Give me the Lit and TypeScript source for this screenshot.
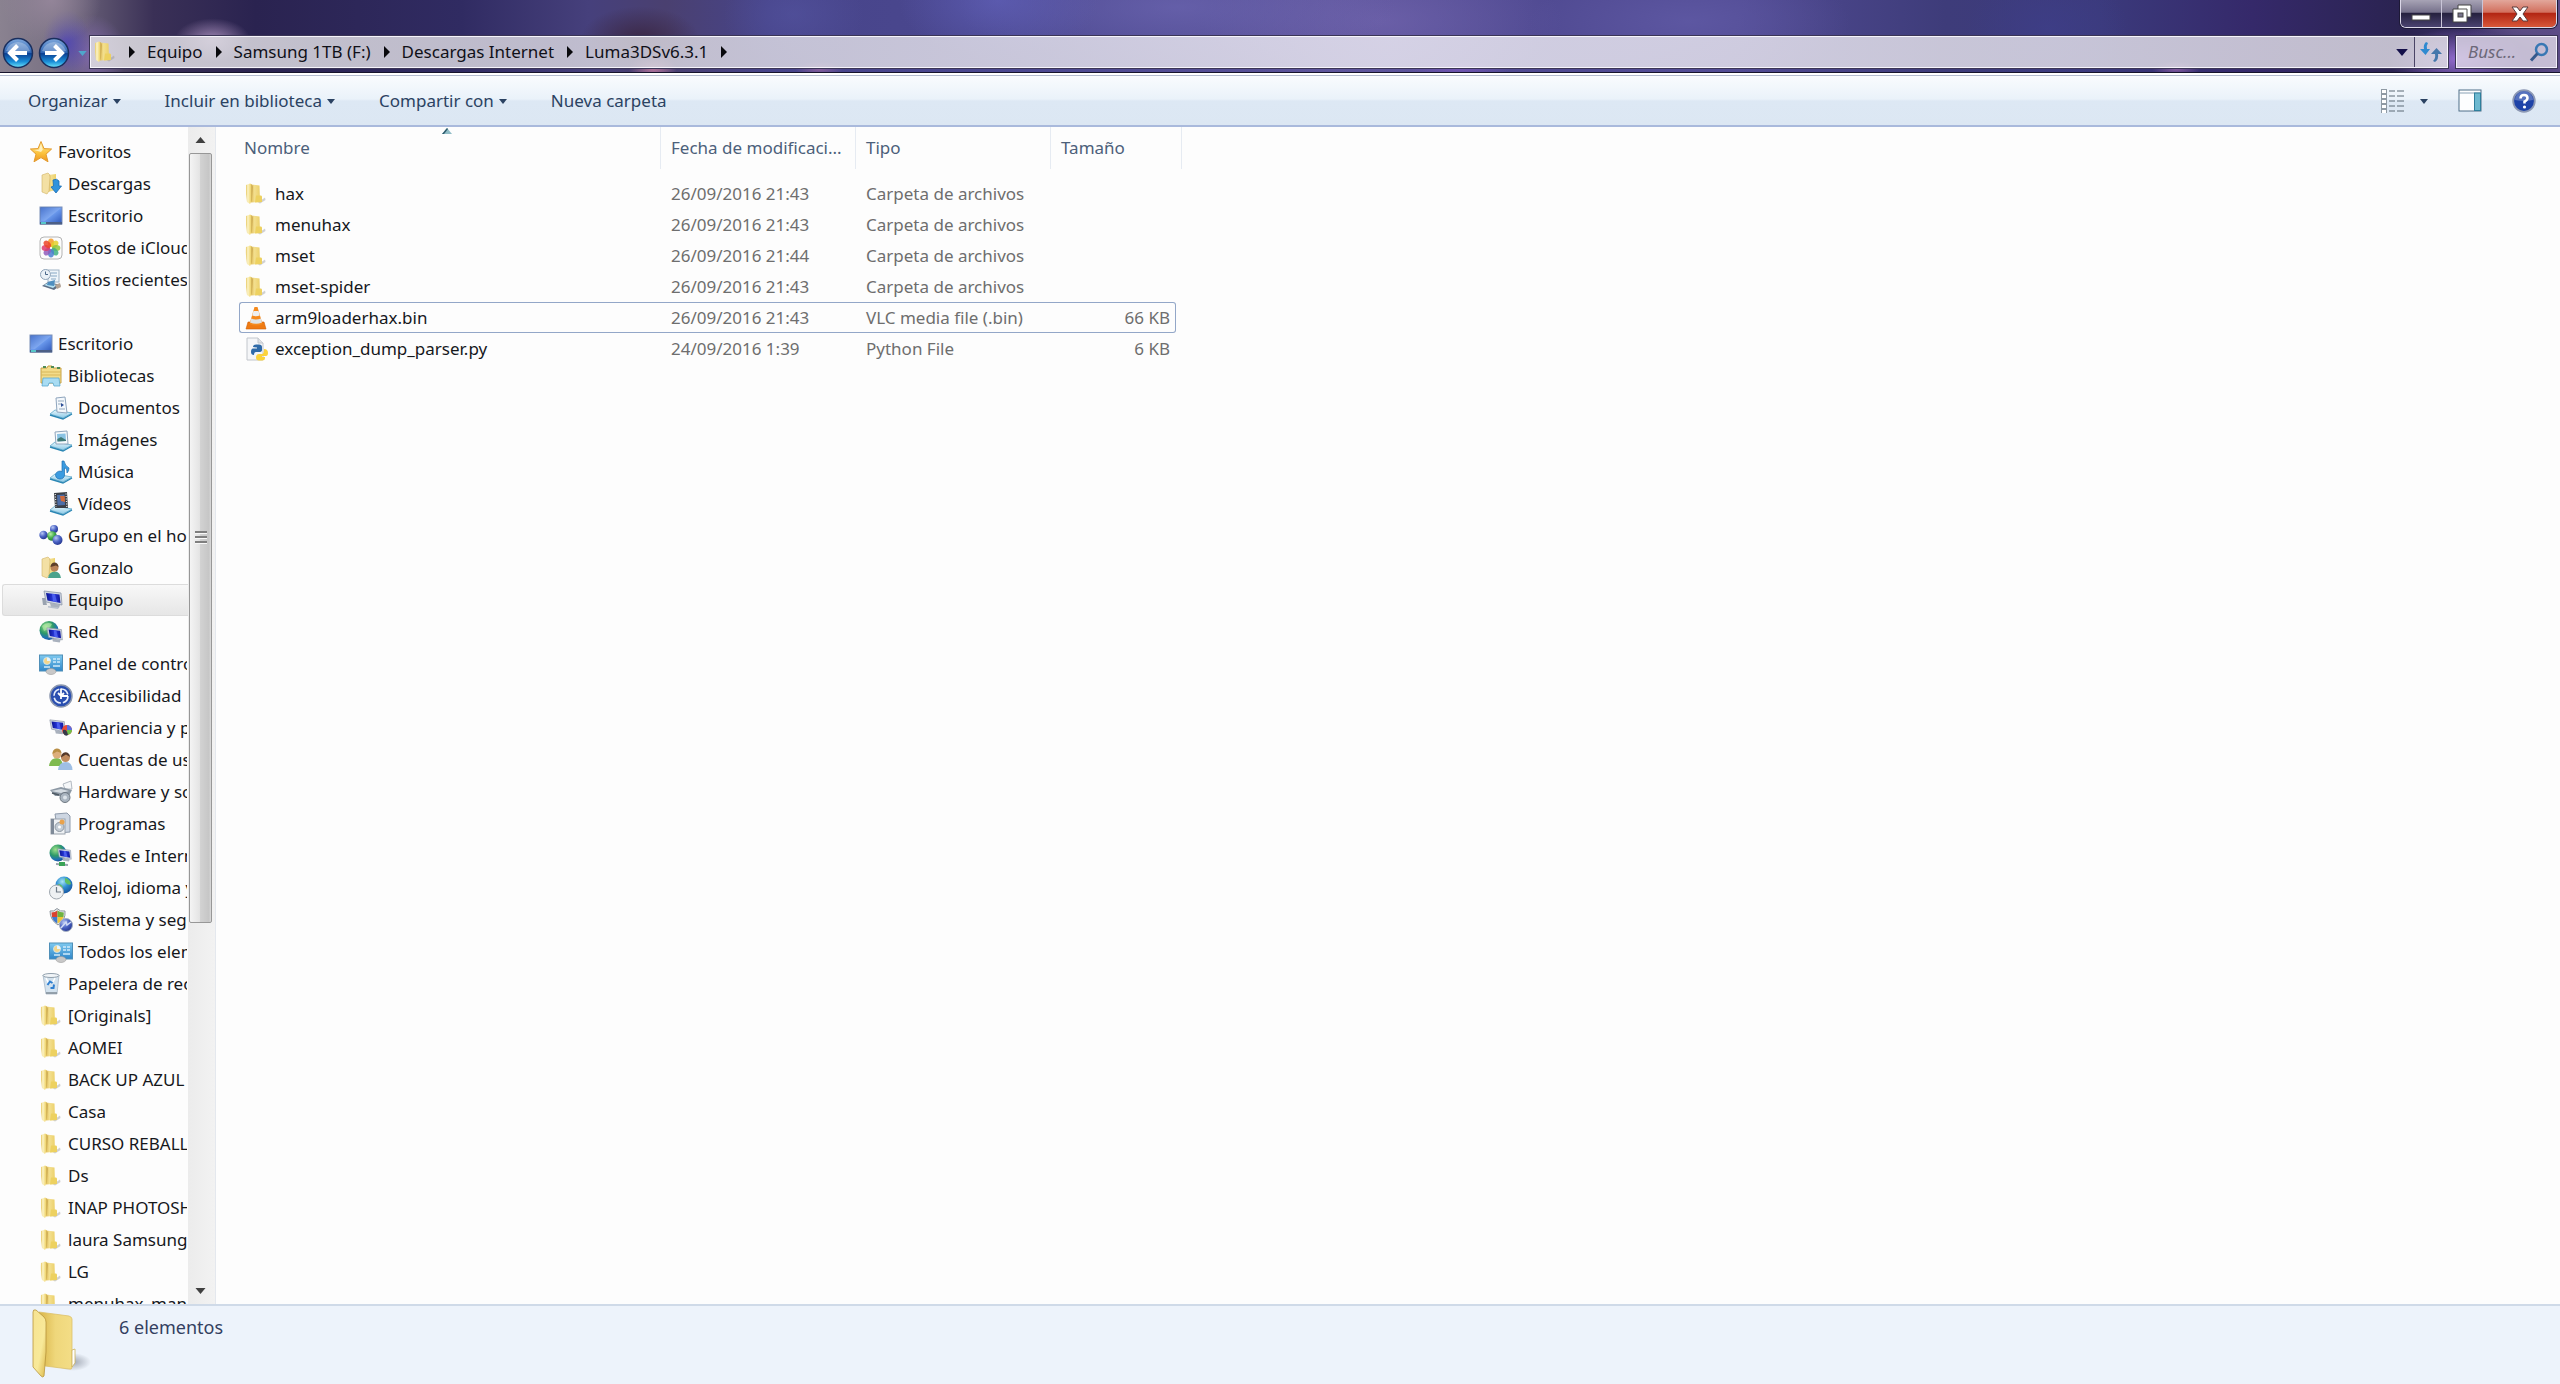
import { LitElement, html, css, svg, TemplateResult } from "lit";
import { customElement, state } from "lit/decorators.js";
import { classMap } from "lit/directives/class-map.js";

type IconName = string;

interface TreeItem {
  label: string;
  icon: IconName;
  level: number;
}

interface FileRow {
  name: string;
  icon: IconName;
  date: string;
  type: string;
  size: string;
}

const gradients = svg`
  <linearGradient id="gold" x1="0" x2="1"><stop offset="0" stop-color="#e2c05c"/><stop offset=".4" stop-color="#f3df8e"/><stop offset="1" stop-color="#ecd06a"/></linearGradient>
  <linearGradient id="goldFront" x1="0" x2="1"><stop offset="0" stop-color="#e6c65e"/><stop offset=".3" stop-color="#fcf4c8"/><stop offset=".7" stop-color="#f1d878"/><stop offset="1" stop-color="#b8923a"/></linearGradient>
  <linearGradient id="screen" x1="0" y1="0" x2="1" y2="1"><stop offset="0" stop-color="#2f5fc4"/><stop offset=".5" stop-color="#6c9bee"/><stop offset="1" stop-color="#2c55b8"/></linearGradient>
  <linearGradient id="navy" x1="0" x2="1"><stop offset="0" stop-color="#0a1390"/><stop offset=".5" stop-color="#2a3ae0"/><stop offset="1" stop-color="#10179c"/></linearGradient>
  <linearGradient id="tray" x1="0" y1="0" x2="0" y2="1"><stop offset="0" stop-color="#e6f6fc"/><stop offset="1" stop-color="#8cc9e6"/></linearGradient>
  <radialGradient id="globe" cx=".35" cy=".3" r=".8"><stop offset="0" stop-color="#9fe08a"/><stop offset=".45" stop-color="#2e9a68"/><stop offset=".75" stop-color="#1f6fb8"/><stop offset="1" stop-color="#123f80"/></radialGradient>
  <radialGradient id="globeBlue" cx=".4" cy=".3" r=".8"><stop offset="0" stop-color="#a8e6f4"/><stop offset=".45" stop-color="#2f8fd2"/><stop offset="1" stop-color="#124a96"/></radialGradient>
  <radialGradient id="ballBlue" cx=".35" cy=".3" r=".8"><stop offset="0" stop-color="#b9c8f5"/><stop offset=".5" stop-color="#4a63c4"/><stop offset="1" stop-color="#1f2f86"/></radialGradient>
  <radialGradient id="ballGreen" cx=".35" cy=".3" r=".8"><stop offset="0" stop-color="#b8f0a8"/><stop offset=".5" stop-color="#45ad4c"/><stop offset="1" stop-color="#1e6e30"/></radialGradient>
  <linearGradient id="panel" x1="0" y1="0" x2="0" y2="1"><stop offset="0" stop-color="#7fcaf0"/><stop offset="1" stop-color="#2f86c8"/></linearGradient>
  <linearGradient id="star" x1="0" y1="0" x2="0" y2="1"><stop offset="0" stop-color="#fff0a0"/><stop offset=".6" stop-color="#fbc03a"/><stop offset="1" stop-color="#ee9420"/></linearGradient>`;

const tray = svg`
  <path d="M1 18 L6 14 L23 17 L14 22 Z" fill="url(#tray)" stroke="#5fa9cc" stroke-width=".8"/>
  <path d="M1 19 L14 23 L23 18" fill="none" stroke="#2a86b4" stroke-width="1.4"/>`;

const monitor = (x: number, y: number, s: number) => svg`
  <g transform="translate(${x} ${y}) scale(${s})">
    <path d="M7 13 L17 15 L16 18 L8 17 Z" fill="#a9b1bd"/>
    <path d="M1 1 L18 3 L19 15 L3 12 Z" fill="#cfd6e2" stroke="#8d97a8" stroke-width=".8"/>
    <path d="M3 3 L16.500 4.500 L17.500 13 L4.500 10.500 Z" fill="url(#navy)"/>
    <path d="M9 4 L12 4.200 L14 12 L10 11.500 Z" fill="#5468f2" opacity=".8"/>
  </g>`;

const shapes: Record<string, TemplateResult> = {
  folder: svg`
    <path d="M14 20.500 L21 15.500 L21.500 18 L16 21.500 Z" fill="#8f8f8f" opacity=".4"/>
    <path d="M7 2.500 L15.500 3.500 L16 20 L7 20.500 Z" fill="url(#gold)"/>
    <path d="M12 13.500 L17 13.500 Q18 13.500 18 15 L18 20 L11 20.500 Z" fill="#edd160"/>
    <path d="M2 3 L6 1.500 Q8.500 2 8.500 5 L8 18 L6 22 L3 20 Q1.500 12 2 3 Z" fill="url(#goldFront)"/>`,
  star: svg`<path d="M12 1.500 L15 8.600 L22.600 9 L17 14.200 L19 21.800 L12 17.600 L5 21.800 L7 14.200 L1.400 9 L9 8.600 Z" fill="url(#star)" stroke="#e39a2c" stroke-width="1"/>
    <path d="M12 4 L13.800 9.800 L12 12 L5 10 L10 9.500 Z" fill="#fffbe0" opacity=".75"/>`,
  downloads: svg`
    <path d="M9 3 L17 2 L17 18 L9 20 Z" fill="url(#gold)"/>
    <path d="M3 3 L9 1 Q11 2 11 5 L10 19 L8 22 L3 20 Z" fill="#f3e0a4" stroke="#d1b466" stroke-width=".6"/>
    <path d="M14 8 Q18 6 20 9 L20 14 L22.500 14 L17 21 L12 15 L14.500 14 Z" fill="#2f93dd" stroke="#1a6db2" stroke-width=".8"/>`,
  desktop: svg`
    <rect x="1" y="3" width="22" height="17" fill="url(#screen)" stroke="#7b8fb8" stroke-width="1"/>
    <path d="M2 4 H22 L6 17 H2 Z" fill="#fff" opacity=".12"/>
    <rect x="1" y="18" width="22" height="2.500" fill="#4c5f86"/>
    <rect x="2" y="18" width="5" height="2" fill="#58c7c9"/>`,
  photos: svg`
    <rect x="1" y="1" width="22" height="22" rx="4" fill="#fcfcfc" stroke="#b4b4b4" stroke-width="1"/>
    ${[
      ["#f59a23", 0], ["#e3cf2a", 45], ["#8fc63b", 90], ["#3faf84", 135],
      ["#4a7fd0", 180], ["#8f5cbc", 225], ["#dc3a6c", 270], ["#ec4427", 315],
    ].map(([c, a]) => svg`<ellipse cx="12" cy="6.800" rx="3" ry="4.200" fill=${c} opacity=".85" transform="rotate(${a} 12 12)"/>`)}`,
  recent: svg`
    <path d="M3 18 L9 14 L22 17 L15 22 Z" fill="#5d6f86"/>
    <path d="M5 17 L9 15 L18 17 L14 20 Z" fill="#b7e2f2"/>
    <rect x="9" y="2" width="11" height="12" fill="#eef5fa" stroke="#9fb3c6"/>
    <path d="M12 5 h6 M12 8 h6 M12 11 h5" stroke="#86a7c4"/>
    <circle cx="6.500" cy="6.500" r="5" fill="#eaf1f7" stroke="#8ea3b8"/>
    <path d="M6.500 3.500 V6.500 H9" stroke="#4a6788" fill="none"/>
    <path d="M9 14 L16 12 L15 18 L8 17 Z" fill="#4f8fc0"/>
    <path d="M16 17 L21 15 L22 19 L18 21 Z" fill="#b4a394"/>`,
  libraries: svg`
    <path d="M2 4 H8 L9 2 H13 L14 4 H22 V19 H2 Z" fill="#f3dc8a" stroke="#c7a247"/>
    <path d="M2 8 H22 M2 11 H22" stroke="#d8b75a"/>
    <path d="M4 3 h3 M12 3 h3 M18 4 h3" stroke="#4f8b54" stroke-width="2"/>
    <path d="M4 14 L20 14 L21 22 L15 22 L14 19 L10 19 L9 22 L3 22 Z" fill="#a8dcf3" stroke="#5ba8cf" stroke-width=".8"/>`,
  documents: svg`${tray}
    <path d="M7 2 L16 1 L18 17 L8 16 Z" fill="#f4f8fc" stroke="#8fa5bd"/>
    <path d="M9 5 h6 M9 8 h3 M10 13 h6" stroke="#93a8bd"/><path d="M12 7 L15 9 L12 11 Z" fill="#2c4d96"/>`,
  images: svg`${tray}
    <path d="M6 4 L18 3 L19 16 L7 16 Z" fill="#f7fafc" stroke="#8fa5bd"/>
    <path d="M8 6 L16.500 5.500 L17 13 L8.500 13.500 Z" fill="#8ac3e4"/><path d="M8.300 11 L12 9 L17 12 L17 13 L8.500 13.500 Z" fill="#3f7a76"/>`,
  music: svg`${tray}
    <path d="M15 1 Q16 6 20 8 Q20 11 18 13 Q18 8 15.500 8 V15 A4.500 4 0 1 1 13 11.500 V1 Z" fill="#3b9be0" stroke="#1d6fb0" stroke-width=".7"/>`,
  videos: svg`${tray}
    <path d="M5 1 L18 0 L19 16 L6 16 Z" fill="#3b4048"/><path d="M8 3 L15.500 2.500 L16 13 L8.500 13.500 Z" fill="#4d6ea8"/>
    <path d="M11 4 L15.600 4 L16 10 L12 9 Z" fill="#cf6a3c"/><path d="M6.300 2 L7 15 M17 1.500 L17.800 15" stroke="#e6e6e6" stroke-dasharray="1 1.500" stroke-width="1.200"/>`,
  homegroup: svg`
    <path d="M5 11 L14 10 L18 17 M14 10 L15 5" stroke="#9db6d0" stroke-width="2"/>
    <circle cx="15" cy="5" r="4" fill="url(#ballBlue)"/><circle cx="4.500" cy="11" r="4.200" fill="url(#ballBlue)"/>
    <circle cx="13" cy="12" r="4.800" fill="url(#ballGreen)"/><circle cx="18.500" cy="16" r="5" fill="url(#ballBlue)"/>`,
  user: svg`
    <path d="M9 3 L16 2 L16 19 L9 20 Z" fill="url(#gold)"/>
    <path d="M3 3 L9 1 Q11 2 11 5 L10 19 L8 22 L3 20 Z" fill="#f3e0a4" stroke="#d1b466" stroke-width=".6"/>
    <path d="M9 22 Q10 15.500 16 15.500 Q21 15.500 22 22 Z" fill="#4ba38c"/>
    <circle cx="15.500" cy="11.500" r="4" fill="#b98358"/><path d="M11.500 11 A4 4.500 0 0 1 19.500 11 L17 9.500 Z" fill="#5c3f2a"/>`,
  computer: svg`${monitor(4, 2, 1)}
    <path d="M3 10 L6 10 L8 17 L4 17 Z" fill="#9aa3b0"/><path d="M9 18 L20 19.500 L19 21 L9 19.500 Z" fill="#b7bfcb"/>`,
  network: svg`<circle cx="10" cy="10.500" r="9.500" fill="url(#globe)"/>
    <path d="M3 6 Q8 1 13 4 Q11 9 5 11 Z" fill="#bdeeb0" opacity=".6"/>${monitor(7, 7, .86)}`,
  panel: svg`<rect x="0.500" y="3" width="23" height="16" fill="url(#panel)" stroke="#4f8fb8"/>
    <circle cx="8" cy="9" r="3.500" fill="#f4d58a" stroke="#cfeafa" stroke-width=".8"/><path d="M8 9 V5.500 A3.500 3.500 0 0 1 11.500 9 Z" fill="#e8f6fd"/>
    <path d="M14 7 h3 M18 7 h3 M14 10 h3 M18 10 h3 M5 15 h6 M14 14 h7" stroke="#cfeafa" stroke-width="1.300"/>
    <ellipse cx="12" cy="19.500" rx="5" ry="3" fill="#c8c8c8" stroke="#9b9b9b" stroke-width=".6"/>`,
  access: svg`<circle cx="12" cy="12" r="11" fill="#2a4fb0" stroke="#8b97ae" stroke-width="1.500"/>
    <circle cx="12" cy="12" r="7" fill="none" stroke="#e8effc" stroke-width="1.600" stroke-dasharray="9 2"/>
    <path d="M12 4.500 V12 H19 M9 9 L12 12 L15 9 M12 12 V15" stroke="#fff" stroke-width="1.800" fill="none"/>`,
  appearance: svg`${monitor(0, 3, .85)}
    <circle cx="18" cy="14" r="5" fill="#e84b38"/><path d="M18 14 L18 9 A5 5 0 0 1 23 14 Z" fill="#5a6fe0"/><path d="M18 14 L23 14 A5 5 0 0 1 18 19 Z" fill="#6fc04a"/>
    <path d="M14 14 Q18 13 19 19 Q16 21 14 17 Z" fill="#37394a"/>`,
  accounts: svg`
    <path d="M0 18 Q1 10 8 10 Q13 10 14 18 Z" fill="#7fba50"/><circle cx="8" cy="6" r="4.500" fill="#dcae7c"/><path d="M3.500 6 A4.500 5 0 0 1 12.500 5 L8 3.500 Z" fill="#b98e45"/>
    <path d="M9 22 Q10 14 17 14 Q23 14 23.500 22 Z" fill="#9fbfe4"/><circle cx="16.500" cy="9.500" r="4.500" fill="#c08a5c"/><path d="M12 9.500 A4.500 5 0 0 1 21 9 L17 6.500 Z" fill="#54392a"/>`,
  hardware: svg`
    <path d="M14 4 L22 1 L23 9 L16 9 Z" fill="#f5f7f9" stroke="#b3bac2"/>
    <path d="M1 10 L12 7 L23 10 L20 16 L6 16 Z" fill="#8c98a4"/><path d="M2 11 L12 9 L20 11 L12 13 Z" fill="#d5dce2"/>
    <path d="M3 13 L10 15" stroke="#4e5963" stroke-width="1.500"/>
    <circle cx="16" cy="17.500" r="5" fill="#a9b4bf" stroke="#6d7781"/><circle cx="16" cy="17.500" r="2" fill="#dde4ea"/>`,
  programs: svg`
    <path d="M6 2 L18 1 L21 4 V20 L9 21 Z" fill="#cdd6e2" stroke="#8f9bac"/>
    <rect x="2" y="7" width="14" height="15" fill="#eef1f4" stroke="#9aa2ac"/>
    <rect x="2" y="7" width="3" height="15" fill="#7f8a98"/><circle cx="10.500" cy="15" r="4.500" fill="#c3ccd5" stroke="#8d97a2"/><circle cx="10.500" cy="15" r="1.500" fill="#fff"/>
    <circle cx="13" cy="10" r="2.500" fill="#e9a24c"/>`,
  internet: svg`<circle cx="9" cy="9" r="8.500" fill="url(#globe)"/>${monitor(8, 4, .75)}
    <path d="M7 20 L19 21" stroke="#9aa3ad" stroke-width="2"/><rect x="10" y="18" width="6" height="4" fill="#3aa356"/>`,
  clock: svg`<circle cx="15" cy="9" r="8.500" fill="url(#globeBlue)"/>
    <path d="M16 2 Q21 3 22 8 Q19 10 16 6 Z M9 8 Q13 8 14 12 L10 13 Z" fill="#5fbf62"/>
    <circle cx="7.500" cy="16" r="7" fill="#eef1f3" stroke="#a0a8b0"/><path d="M7.500 11 V16 H12" stroke="#6f7b86" stroke-width="1.200" fill="none"/>`,
  security: svg`
    <path d="M1 3 Q5 4 8 0.500 Q11 4 16 3 Q17 12 9 17 Q1 12 1 3 Z" fill="#e6e9ec" stroke="#8e969e"/>
    <path d="M2.500 4.500 Q6 4.500 8.500 2.500 V9 H3 Z" fill="#d9412f"/><path d="M8.500 2.500 Q11 4.500 14.800 4.500 L14.500 9 H8.500 Z" fill="#6fb23f"/>
    <path d="M3 9 H8.500 V15.500 Q4 13 3 9 Z" fill="#3f78cc"/><path d="M8.500 9 H14.500 Q13 13 8.500 15.500 Z" fill="#f0c437"/>
    <circle cx="17" cy="17" r="6.500" fill="url(#ballBlue)" stroke="#a8b3c4"/><path d="M12 20 L17 14 L18 17 L22 14" stroke="#cfdaf5" stroke-width="1.500" fill="none"/>`,
  bin: svg`<path d="M4 3 L20 3 L18 22 L7 22 Z" fill="#d3e2ee" stroke="#a9b8c5" stroke-width=".8"/><ellipse cx="12" cy="3.500" rx="8" ry="2" fill="#f1f5f8" stroke="#93a1ad"/>
    <path d="M7 6 L10 12 M16 6 L14 10" stroke="#fff" stroke-width="1.500"/>
    <path d="M8.500 13 L11 9.500 L13.500 11 M15 12.500 L14.500 16 L11.500 16" stroke="#2f7fd0" stroke-width="2" fill="none"/><path d="M7 21 H18" stroke="#7f8b96" stroke-width="1.500"/>`,
  cone: svg`<path d="M4 16 L20 16 L22 23 L2 23 Z" fill="#ef7a12" stroke="#cf5f08" stroke-width=".6"/>
    <path d="M10.500 1 H13.500 L18.500 18 Q12 21 5.500 18 Z" fill="#f58a1e"/>
    <path d="M9.500 5 H14.500 L15.800 9.500 Q12 11 8.200 9.500 Z" fill="#eef0f2"/><path d="M7.300 12.500 Q12 14.500 16.800 12.500 L18 16.500 Q12 19 6 16.500 Z" fill="#dfe3e6"/>`,
  python: svg`<path d="M3 1 H14 L19 6 V23 H3 Z" fill="#f5f6f8" stroke="#c2c6cc"/><path d="M14 1 V6 H19" fill="#dfe2e6" stroke="#c2c6cc"/>
    <path d="M9 10 Q9 7.500 12 7.500 H15 Q18 7.500 18 10 V13 Q18 15 15 15 H12 Q10 15 10 18 Q7 18 7 15 Q7 11.500 9 11.500 H13 V10.500 Z" fill="#2f6aa8"/>
    <path d="M20 12 Q24 12 24 16 Q24 19 22 19 H18 V20 H21 V21 Q21 23.500 18 23.500 H15 Q12 23.500 12 20.500 Q12 17 15 17 H18 Q20 17 20 12 Z" fill="#fbd33c"/>`,
};

const icon = (name: IconName) => html`
  <svg class="icon" viewBox="0 0 24 24" aria-hidden="true"><defs>${gradients}</defs>${shapes[name]}</svg>`;

const caret = () => html`<svg class="caret" viewBox="0 0 10 6" aria-hidden="true"><path d="M0 0 H10 L5 6 Z" fill="currentColor" /></svg>`;

const TREE: TreeItem[] = [
  { label: "Escritorio", icon: "desktop", level: 0 },
  { label: "Bibliotecas", icon: "libraries", level: 1 },
  { label: "Documentos", icon: "documents", level: 2 },
  { label: "Imágenes", icon: "images", level: 2 },
  { label: "Música", icon: "music", level: 2 },
  { label: "Vídeos", icon: "videos", level: 2 },
  { label: "Grupo en el hogar", icon: "homegroup", level: 1 },
  { label: "Gonzalo", icon: "user", level: 1 },
  { label: "Equipo", icon: "computer", level: 1 },
  { label: "Red", icon: "network", level: 1 },
  { label: "Panel de control", icon: "panel", level: 1 },
  { label: "Accesibilidad", icon: "access", level: 2 },
  { label: "Apariencia y personalización", icon: "appearance", level: 2 },
  { label: "Cuentas de usuario", icon: "accounts", level: 2 },
  { label: "Hardware y sonido", icon: "hardware", level: 2 },
  { label: "Programas", icon: "programs", level: 2 },
  { label: "Redes e Internet", icon: "internet", level: 2 },
  { label: "Reloj, idioma y región", icon: "clock", level: 2 },
  { label: "Sistema y seguridad", icon: "security", level: 2 },
  { label: "Todos los elementos", icon: "panel", level: 2 },
  { label: "Papelera de reciclaje", icon: "bin", level: 1 },
  { label: "[Originals]", icon: "folder", level: 1 },
  { label: "AOMEI", icon: "folder", level: 1 },
  { label: "BACK UP AZUL", icon: "folder", level: 1 },
  { label: "Casa", icon: "folder", level: 1 },
  { label: "CURSO REBALLING", icon: "folder", level: 1 },
  { label: "Ds", icon: "folder", level: 1 },
  { label: "INAP PHOTOSHOP", icon: "folder", level: 1 },
  { label: "laura Samsung", icon: "folder", level: 1 },
  { label: "LG", icon: "folder", level: 1 },
  { label: "menuhax_manager", icon: "folder", level: 1 },
];

const FAVORITES: TreeItem[] = [
  { label: "Favoritos", icon: "star", level: 0 },
  { label: "Descargas", icon: "downloads", level: 1 },
  { label: "Escritorio", icon: "desktop", level: 1 },
  { label: "Fotos de iCloud", icon: "photos", level: 1 },
  { label: "Sitios recientes", icon: "recent", level: 1 },
];

const FILES: FileRow[] = [
  { name: "hax", icon: "folder", date: "26/09/2016 21:43", type: "Carpeta de archivos", size: "" },
  { name: "menuhax", icon: "folder", date: "26/09/2016 21:43", type: "Carpeta de archivos", size: "" },
  { name: "mset", icon: "folder", date: "26/09/2016 21:44", type: "Carpeta de archivos", size: "" },
  { name: "mset-spider", icon: "folder", date: "26/09/2016 21:43", type: "Carpeta de archivos", size: "" },
  { name: "arm9loaderhax.bin", icon: "cone", date: "26/09/2016 21:43", type: "VLC media file (.bin)", size: "66 KB" },
  { name: "exception_dump_parser.py", icon: "python", date: "24/09/2016 1:39", type: "Python File", size: "6 KB" },
];

const base = css`
  * { box-sizing: border-box; }
  button { font: inherit; color: inherit; background: none; border: 0; padding: 0; margin: 0; }
  a { color: inherit; text-decoration: none; }
  svg { display: block; }
  .icon { width: 24px; height: 24px; flex: none; overflow: visible; }
  .caret { width: 8px; height: 5px; flex: none; }
`;

@customElement("title-bar")
class TitleBar extends LitElement {
  static styles = [base, css`
    :host {
      display: block;
      border-bottom: 1px solid #17142c;
      background:
        radial-gradient(50px 44px at 2% 0, rgba(150, 135, 155, .9), transparent),
        radial-gradient(24px 34px at 2.600% 60%, rgba(80, 70, 180, .9), transparent),
        radial-gradient(34px 40px at 3.600% 76%, rgba(130, 105, 175, .9), transparent),
        radial-gradient(38px 22px at 8.300% 56%, rgba(165, 140, 185, .95), transparent),
        radial-gradient(60px 34px at 25% 56%, rgba(58, 38, 66, .95), transparent),
        radial-gradient(24px 14px at 25.500% 95%, rgba(205, 130, 170, .9), transparent),
        radial-gradient(24px 8px at 32% 96%, rgba(150, 100, 160, .8), transparent),
        radial-gradient(50px 8px at 57% 96%, rgba(120, 85, 185, .8), transparent),
        radial-gradient(24px 8px at 85% 96%, rgba(150, 100, 170, .8), transparent),
        radial-gradient(70px 30px at 96% 82%, rgba(150, 110, 210, .95), transparent),
        radial-gradient(60px 30px at 98.500% 30%, rgba(100, 85, 140, .9), transparent),
        radial-gradient(100px 60px at 39% 0, rgba(96, 96, 185, .7), transparent),
        radial-gradient(220px 60px at 46% 10%, rgba(112, 106, 182, .6), transparent),
        radial-gradient(180px 70px at 54% 30%, rgba(118, 104, 178, .6), transparent),
        radial-gradient(160px 60px at 66% 30%, rgba(98, 92, 168, .7), transparent),
        radial-gradient(70px 50px at 31% 20%, rgba(84, 84, 160, .6), transparent),
        radial-gradient(80px 60px at 80% 40%, rgba(62, 62, 136, .8), transparent),
        linear-gradient(90deg, #8a8290 0, #7a7284 2%, #3a3056 6%, #2a2350 10%, #302b62 18%, #46407c 23%, #4a4070 26%, #47448a 30%, #4b4890 40%, #5a5298 52%, #504a92 60%, #504a92 68%, #3e3c7a 76%, #3b3a7c 82%, #35296a 88%, #2a2350 94%, #3b3068 97%, #5b4a86 100%);
    }
    .caption { display: flex; justify-content: flex-end; height: 34px; padding-right: 3px; }
    .window { display: flex; height: 28px; border: 1px solid #dcd8e8; border-top: 0; border-radius: 0 0 6px 6px; overflow: hidden; box-shadow: 0 0 0 1px #1d1936; }
    .window button { display: grid; place-items: center; width: 41px; border-right: 1px solid #c9c5d8; background: linear-gradient(#a7a3b5, #77728c 45%, #26213f 50%, #4a4370); }
    .window button.close { width: 73px; border-right: 0; background: linear-gradient(#e2a79b, #d2705e 45%, #b32613 50%, #d8583a); }
    .address { display: flex; align-items: center; height: 38px; padding: 0 3px 0 2px; }
    .round { width: 32px; height: 32px; margin-right: 4px; }
    .history { width: 16px; color: #4fa6cc; display: grid; place-items: center; }
    .history .caret { width: 11px; }
    .path { display: flex; align-items: center; flex: 1; height: 32px; margin-top: -2px; border: 1px solid #f6f4fb; outline: 1px solid #3b3556; outline-offset: 0; background: linear-gradient(90deg, rgba(222, 220, 226, .88), rgba(214, 212, 222, .84) 20%, rgba(234, 232, 242, .84) 55%, rgba(216, 213, 224, .86)); color: #101018; }
    .path .icon { margin-left: 2px; margin-right: 12px; }
    .crumbs { display: flex; align-items: center; flex: 1; list-style: none; margin: 0; padding: 0; gap: 12px; white-space: nowrap; }
    .crumbs li { display: flex; align-items: center; gap: 13px; }
    .arrow { width: 6px; height: 12px; }
    .drop { width: 24px; height: 30px; display: grid; place-items: center; color: #14104a; }
    .drop .caret { width: 12px; height: 7px; }
    .refresh { width: 33px; height: 30px; display: grid; place-items: center; border-left: 1px solid #4a4466; background: rgba(255, 255, 255, .12); }
    .search { display: flex; align-items: center; width: 101px; height: 32px; margin: -2px 0 0 8px; padding: 0 7px 0 11px; border: 1px solid #f2eefa; outline: 1px solid #3b3556; background: rgba(222, 216, 230, .82); }
    input { width: 100%; min-width: 0; border: 0; outline: 0; padding: 0; background: none; font: inherit; font-style: italic; color: #6c6878; }
    input::placeholder { color: #6c6878; opacity: 1; }
    .search svg { width: 20px; height: 20px; flex: none; }
  `];

  private round(label: string, path: string, id: string) {
    return html`<button class="round" aria-label=${label}>
      <svg viewBox="0 0 32 32" width="32" height="32">
        <defs>
          <linearGradient id=${id} x1="0" y1="0" x2="0" y2="1">
            <stop offset="0" stop-color="#7fa8dc" /><stop offset=".48" stop-color="#2f66b4" />
            <stop offset=".52" stop-color="#0c3f92" /><stop offset=".8" stop-color="#1b8fd8" /><stop offset="1" stop-color="#6fe6fb" />
          </linearGradient>
        </defs>
        <circle cx="16" cy="16" r="14.500" fill="url(#${id})" stroke="#1a2f5e" stroke-width="1.500" />
        <path d="M4 14 A12.500 12.500 0 0 1 28 14 Q16 17 4 14 Z" fill="#fff" opacity=".28" />
        <path d=${path} fill="none" stroke="#fff" stroke-width="4" stroke-linejoin="miter" />
      </svg>
    </button>`;
  }

  render() {
    const crumbs = ["Equipo", "Samsung 1TB (F:)", "Descargas Internet", "Luma3DSv6.3.1"];
    const arrow = html`<svg class="arrow" viewBox="0 0 6 12" aria-hidden="true"><path d="M0 0 L6 6 L0 12 Z" fill="#08080c" /></svg>`;
    return html`
      <div class="caption">
        <div class="window">
          <button aria-label="Minimizar"><svg width="20" height="20" viewBox="0 0 20 20"><rect x="1" y="11" width="18" height="5" fill="#fff" stroke="#444" /></svg></button>
          <button aria-label="Restaurar"><svg width="20" height="20" viewBox="0 0 20 20"><path d="M6 1 H19 V13 H15 V18 H1 V5 H6 Z" fill="#fff" stroke="#444" /><path d="M6 5 H15 V13" fill="none" stroke="#555" /><rect x="6" y="9" width="5" height="4" fill="#77728c" stroke="#444" /></svg></button>
          <button class="close" aria-label="Cerrar"><svg width="20" height="20" viewBox="0 0 20 20"><path d="M2 3 H7 L10 7 L13 3 H18 L13 10 L18 17 H13 L10 13 L7 17 H2 L7 10 Z" fill="#fff" stroke="#5a3b3b" /></svg></button>
        </div>
      </div>
      <div class="address">
        ${this.round("Atrás", "M25 16 H9 M15.500 8.500 L8 16 L15.500 23.500", "back")}
        ${this.round("Adelante", "M7 16 H23 M16.500 8.500 L24 16 L16.500 23.500", "forward")}
        <button class="history" aria-label="Páginas recientes">${caret()}</button>
        <nav class="path" aria-label="Ruta">
          ${icon("folder")}
          <ol class="crumbs"><li>${arrow}</li>${crumbs.map((c) => html`<li><a href="#">${c}</a>${arrow}</li>`)}</ol>
          <button class="drop" aria-label="Ubicaciones anteriores">${caret()}</button>
          <button class="refresh" aria-label="Actualizar">
            <svg width="22" height="20" viewBox="0 0 22 20"><path d="M6 0 Q3 3 4 7 H0 L5.500 13 L10 7 H7 Q6 4 8 1 Z" fill="#2f8ad0" /><path d="M15 20 Q19 17 18 12 H22 L16.500 6 L11 12 H15 Q16 16 13 19 Z" fill="#4577ab" /></svg>
          </button>
        </nav>
        <label class="search">
          <input type="text" placeholder="Busc..." aria-label="Buscar" />
          <svg viewBox="0 0 20 20" aria-hidden="true"><circle cx="12.500" cy="7.500" r="5.500" fill="none" stroke="#3777b4" stroke-width="2.500" /><path d="M8.500 11.500 L2 18.500" stroke="#35598c" stroke-width="3" /></svg>
        </label>
      </div>`;
  }
}

@customElement("command-bar")
class CommandBar extends LitElement {
  static styles = [base, css`
    :host { display: flex; align-items: center; height: 54px; padding: 2px 24px 0 28px; border-top: 2px solid #fff; border-bottom: 2px solid #a9b9dc; box-shadow: inset 0 1px #b5bdd0; background: linear-gradient(#fafcfe, #eaf2fa 48%, #dde8f4 52%, #dce7f3); color: #2b4262; }
    .menus { display: flex; gap: 44px; flex: 1; }
    button { display: flex; align-items: center; gap: 5px; white-space: nowrap; }
    .views { margin-right: 30px; gap: 14px; }
    .preview { margin-right: 30px; }
  `];

  render() {
    const rows = [2, 7, 12, 17, 22];
    return html`
      <div class="menus">
        <button>Organizar ${caret()}</button>
        <button>Incluir en biblioteca ${caret()}</button>
        <button>Compartir con ${caret()}</button>
        <button>Nueva carpeta</button>
      </div>
      <button class="views" aria-label="Cambiar vista">
        <svg width="26" height="24" viewBox="0 0 26 24">
          ${rows.map((y) => svg`<rect x="1.500" y=${y - 1.5} width="5" height="4" fill="#fff" stroke="#8f9aa4"/><path d="M9 ${y} h6 M17 ${y} h7" stroke="#5d6a76" stroke-width="1.200"/>`)}
        </svg>${caret()}
      </button>
      <button class="preview" aria-label="Panel de vista previa">
        <svg width="24" height="24" viewBox="0 0 24 24"><rect x="1" y="1" width="22" height="21" fill="#fdfeff" stroke="#4f6f88" /><path d="M1 4 H23" stroke="#8aa2b6" /><rect x="16.500" y="4" width="6" height="17.500" fill="#6db9d0" stroke="#2f7f9c" /></svg>
      </button>
      <button aria-label="Obtener ayuda">
        <svg width="24" height="24" viewBox="0 0 24 24"><circle cx="12" cy="12" r="10.800" fill="#1e43a8" stroke="#8c98b4" stroke-width="1.800" /><path d="M3 11 A9 9 0 0 1 21 11 Q12 13 3 11 Z" fill="#fff" opacity=".25" /><path d="M8.500 9.500 Q8.500 6 12 6 Q15.500 6 15.500 9 Q15.500 11 12.500 12.500 V14.500" fill="none" stroke="#fff" stroke-width="2.500" /><circle cx="12.500" cy="18" r="1.600" fill="#fff" /></svg>
      </button>`;
  }
}

@customElement("folder-tree")
class FolderTree extends LitElement {
  @state() private current = "Equipo";

  static styles = [base, css`
    :host { display: flex; min-height: 0; width: 216px; border-right: 1px solid #e4e8ee; color: #16181c; }
    nav { flex: 1; min-width: 0; overflow: hidden; padding-top: 9px; }
    ul { list-style: none; margin: 0 0 32px; padding: 0 0 0 2px; }
    a { display: flex; align-items: center; gap: 5px; height: 32px; padding-left: 26px; border: 1px solid transparent; white-space: nowrap; overflow: hidden; }
    .level1 { padding-left: 36px; }
    .level2 { padding-left: 46px; }
    .current { border-color: #dcdcdc; border-right: 0; border-radius: 3px 0 0 3px; background: linear-gradient(#f8f8f8, #e6e6e6); }
    .scroll { display: flex; flex-direction: column; width: 27px; border-left: 1px solid #ececec; padding-right: 3px; background: linear-gradient(90deg, #ececec, #f2f2f2); }
    .scroll button { display: grid; place-items: center; height: 26px; color: #404040; }
    .up .caret { transform: scaleY(-1); }
    .caret { width: 11px; height: 6px; }
    .track { flex: 1; min-height: 0; }
    .thumb { display: grid; place-items: center; height: 68.400%; border: 1px solid #979797; border-radius: 2px; background: linear-gradient(90deg, #f4f4f4, #e4e4e4 45%, #d2d2d2 50%, #c6c6c6 90%, #dadada); }
    .grip { width: 12px; height: 13px; background: repeating-linear-gradient(#7f7f7f 0 2px, #f8f8f8 2px 3px, transparent 3px 5px); }
  `];

  private row(item: TreeItem, selectable: boolean) {
    const current = selectable && item.label === this.current;
    return html`<li><a href="#" class=${classMap({ level1: item.level === 1, level2: item.level === 2, current })}>${icon(item.icon)}<span>${item.label}</span></a></li>`;
  }

  render() {
    return html`
      <nav aria-label="Carpetas">
        <ul>${FAVORITES.map((i) => this.row(i, false))}</ul>
        <ul>${TREE.map((i) => this.row(i, true))}</ul>
      </nav>
      <div class="scroll">
        <button class="up" aria-label="Subir">${caret()}</button>
        <div class="track"><div class="thumb"><span class="grip"></span></div></div>
        <button aria-label="Bajar">${caret()}</button>
      </div>`;
  }
}

@customElement("file-list")
class FileList extends LitElement {
  @state() private focused = "arm9loaderhax.bin";

  static styles = [base, css`
    :host { display: block; flex: 1; min-width: 0; padding-left: 23px; background: #fdfdfd; }
    table { width: 943px; table-layout: fixed; border-collapse: separate; border-spacing: 0; color: #6e6e6e; }
    .name { width: 422px; }
    .date { width: 195px; }
    .type { width: 195px; }
    .edge { width: 6px; }
    th { height: 42px; padding: 0 0 0 10px; border-right: 1px solid #e6ebf2; text-align: left; font-weight: 400; color: #4c607a; white-space: nowrap; position: relative; }
    th:first-child { padding-left: 5px; }
    .sort { position: absolute; top: 1px; left: 50%; width: 10px; height: 6px; margin-left: -8px; }
    thead::after { content: ""; display: block; height: 9px; }
    td { height: 31px; padding: 0 0 0 10px; border: 1px solid transparent; border-width: 1px 0; white-space: nowrap; }
    td:first-child { padding-left: 4px; border-left-width: 1px; color: #16181c; }
    .size { padding: 0 5px 0 0; border-right-width: 1px; text-align: right; }
    .cell { display: flex; align-items: center; gap: 7px; }
    .focused td { border-color: #93a7c8; }
    .focused td:first-child { border-radius: 3px 0 0 3px; }
    .focused .size { border-radius: 0 3px 3px 0; }
  `];

  render() {
    return html`
      <table>
        <colgroup><col class="name" /><col class="date" /><col class="type" /><col /><col class="edge" /></colgroup>
        <thead>
          <tr>
            <th scope="col">Nombre<svg class="sort" viewBox="0 0 10 6" aria-hidden="true"><path d="M0 6 L5 0 L10 6 Z" fill="#8fbcc6" /><path d="M0 6 L5 0 L6 1 L2 6 Z" fill="#2d5a6c" /></svg></th>
            <th scope="col">Fecha de modificaci...</th>
            <th scope="col">Tipo</th>
            <th scope="col" colspan="2">Tamaño</th>
          </tr>
        </thead>
        <tbody>
          ${FILES.map((f) => html`
            <tr class=${classMap({ focused: f.name === this.focused })}>
              <td><span class="cell">${icon(f.icon)}${f.name}</span></td>
              <td>${f.date}</td>
              <td>${f.type}</td>
              <td class="size">${f.size}</td>
            </tr>`)}
        </tbody>
      </table>`;
  }
}

@customElement("details-pane")
class DetailsPane extends LitElement {
  static styles = [base, css`
    :host { display: flex; height: 80px; padding-left: 31px; gap: 28px; border-top: 2px solid #cfdae8; background: #edf3fb; color: #33405f; }
    .folder { width: 60px; height: 72px; margin-top: 3px; }
    p { margin: 8px 0 0; line-height: 26px; font-size: 18px; }
  `];

  render() {
    return html`
      <svg class="folder" viewBox="0 0 60 72" aria-hidden="true">
        <defs>
          <linearGradient id="rear" x1="0" x2="1"><stop offset="0" stop-color="#d9b548" /><stop offset=".5" stop-color="#efd77b" /><stop offset="1" stop-color="#f3dd86" /></linearGradient>
          <linearGradient id="cover" x1="0" x2="1" y2="1"><stop offset="0" stop-color="#f7e391" /><stop offset=".6" stop-color="#f8e999" /><stop offset="1" stop-color="#dcb84a" /></linearGradient>
          <radialGradient id="shade"><stop offset="0" stop-color="#7f8694" stop-opacity=".7" /><stop offset="1" stop-color="#7f8694" stop-opacity="0" /></radialGradient>
        </defs>
        <ellipse cx="42" cy="53" rx="18" ry="9" fill="url(#shade)" />
        <path d="M8 3 L38 7 Q41 8 41 10 L41 58 Q41 61 38 60 L14 57 Z" fill="url(#rear)" stroke="#dcc06a" stroke-width=".8" />
        <path d="M41 41 L44 40 L44 54 L41 58 Z" fill="#fff" stroke="#ccb25c" stroke-width=".8" />
        <path d="M2 3 Q2 0 5 1 L13 8 Q15 10 15 13 L15 43 L13 67 Q12 69 10 67 L2 58 Z" fill="url(#cover)" stroke="#b8963c" stroke-width=".8" />
      </svg>
      <p>6 elementos</p>`;
  }
}

@customElement("app-root")
class AppRoot extends LitElement {
  static styles = [base, css`
    :host { display: flex; flex-direction: column; height: 100vh; overflow: hidden; background: #fdfdfd; font: 17px/24px "Noto Sans", "Open Sans", sans-serif; }
    main { display: flex; flex: 1; min-height: 0; }
  `];

  render() {
    return html`
      <title-bar></title-bar>
      <command-bar></command-bar>
      <main>
        <folder-tree></folder-tree>
        <file-list></file-list>
      </main>
      <details-pane></details-pane>`;
  }
}
